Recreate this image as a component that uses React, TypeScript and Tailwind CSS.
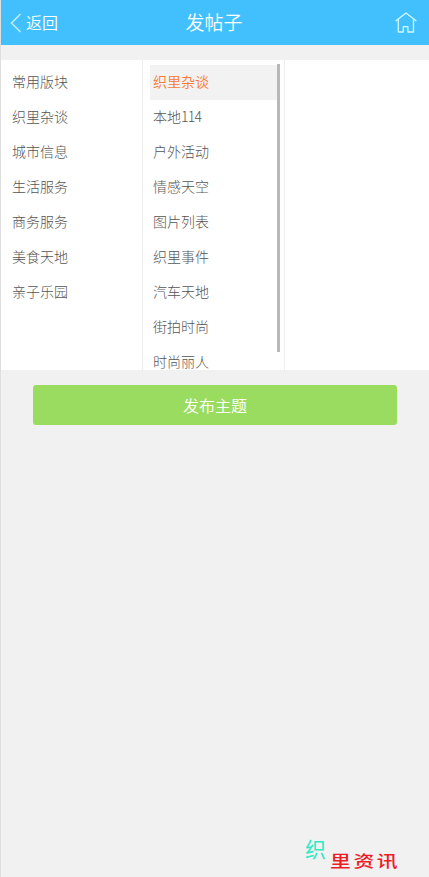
const groups = [
  '常用版块',
  '织里杂谈',
  '城市信息',
  '生活服务',
  '商务服务',
  '美食天地',
  '亲子乐园',
];

const forums = [
  '织里杂谈',
  '本地114',
  '户外活动',
  '情感天空',
  '图片列表',
  '织里事件',
  '汽车天地',
  '街拍时尚',
  '时尚丽人',
];

const activeForum = '织里杂谈';

function BackIcon() {
  return (
    <svg width="12" height="20" viewBox="0 0 12 20" fill="none" stroke="#b9ecff" strokeWidth="1.6">
      <path d="M10.5 1 1.5 10l9 9" />
    </svg>
  );
}

function HomeIcon() {
  return (
    <svg
      width="22"
      height="21"
      viewBox="0 0 22 21"
      fill="none"
      stroke="#d0f8ff"
      strokeWidth="1.3"
      strokeLinecap="round"
      strokeLinejoin="round"
    >
      <path d="M1 8.7 11 1l10 7.7" />
      <path d="M3.3 7.5V20h5v-5.3h4.6V20h5.6V7.5" />
    </svg>
  );
}

export default function App() {
  return (
    <div className="flex min-h-screen flex-col border-l border-[#dedede] bg-[#f1f1f1] font-['Noto_Sans_CJK_SC',sans-serif] font-light">
      <header className="grid h-[45px] grid-cols-3 items-center bg-[#42c0fe] pr-3 pl-[9px] text-white">
        <a className="flex items-center gap-1 text-base leading-[45px] font-[350]">
          <BackIcon />
          返回
        </a>
        <h1 className="pb-0.5 pl-px text-center text-[19px] leading-[43px] font-[350]">发帖子</h1>
        <a className="flex justify-end">
          <HomeIcon />
        </a>
      </header>

      <section className="mt-[15px] flex h-[310px] bg-white text-sm text-[#555]">
        <ul className="w-[142px] shrink-0 overflow-hidden border-r border-[#eee] pt-[5px] pl-[11px]">
          {groups.map((name) => (
            <li key={name} className="h-[35px] leading-[33px]">
              {name}
            </li>
          ))}
        </ul>
        <div className="flex w-[142px] shrink-0 overflow-hidden border-r border-[#eee] pt-[5px] pl-[7px]">
          <ul className="w-[127px]">
            {forums.map((name) => (
              <li
                key={name}
                className={
                  name === activeForum
                    ? 'h-[35px] bg-[#f2f2f2] pl-[3px] leading-[33px] font-[350] text-[#f47b33]'
                    : 'h-[35px] pl-[3px] leading-[33px]'
                }
              >
                {name === '本地114' ? (
                  <>
                    本地<span className="tracking-[-0.8px]">114</span>
                  </>
                ) : (
                  name
                )}
              </li>
            ))}
          </ul>
          <div className="-mt-px h-[288px] w-[3px] bg-[#b8b8b8]" />
        </div>
      </section>

      <button className="mt-[15px] mr-8 ml-8 h-10 rounded-[3px] bg-[#9adc5f] text-base font-[350] text-white">
        发布主题
      </button>

      <footer className="mt-auto mr-[29px] flex h-[42px] justify-end font-normal">
        <span className="mr-1 text-[21px] leading-[27px] text-[#2fe8c4]">织</span>
        <span className="mt-3.5 h-[22px] w-[70px]">
          <span className="block origin-left scale-x-[1.3] text-base leading-[22px] font-medium tracking-[2px] whitespace-nowrap text-[#ee1c25]">
            里资讯
          </span>
        </span>
      </footer>
    </div>
  );
}
